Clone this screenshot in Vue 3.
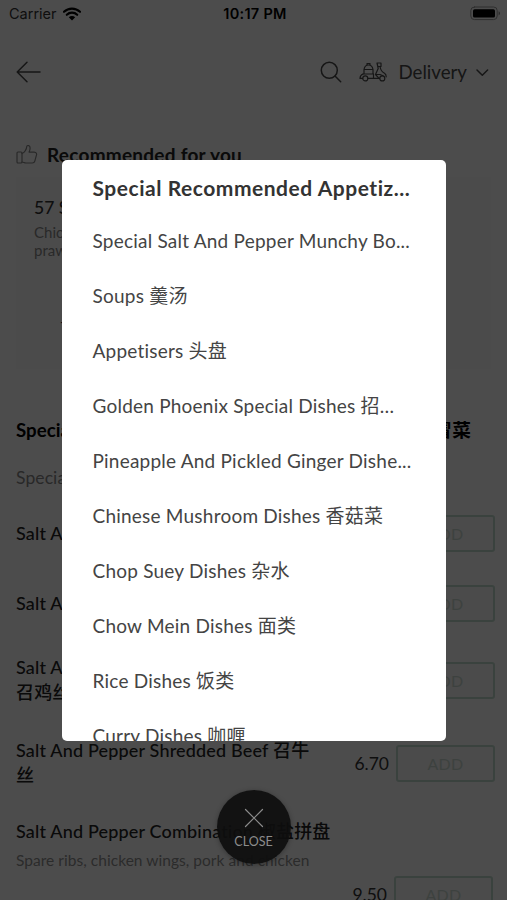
<template>
  <div class="screen">
    <div class="page">
      <div class="status-bar">
        <div class="carrier">
          <span>Carrier</span>
          <svg class="wifi" width="18" height="14" viewBox="0 0 18 14">
            <path d="M1 4.8a11.5 11.5 0 0 1 16 0" />
            <path d="M3.8 7.8a7.5 7.5 0 0 1 10.4 0" />
            <path class="wifi-dot" d="M9 13.4 5.8 10.3a4.6 4.6 0 0 1 6.4 0z" />
          </svg>
        </div>
        <span class="clock">10:17 PM</span>
        <svg class="battery" width="31" height="15" viewBox="0 0 31 15">
          <rect class="battery-case" x=".8" y="1" width="26.4" height="12.6" rx="3.6" />
          <rect x="3" y="3.2" width="22" height="8.4" rx="1.6" />
          <path class="battery-cap" d="M28.6 5.2v4.2a2.3 2.3 0 0 0 0-4.2z" />
        </svg>
      </div>

      <header class="nav-bar">
        <svg class="line-icon" width="25" height="22" viewBox="0 0 25 22">
          <path d="M24 11H1.5M11 1.2 1.2 11l9.8 9.8" />
        </svg>
        <div class="nav-actions">
          <svg class="line-icon search" width="22" height="22" viewBox="0 0 22 22">
            <circle cx="9.3" cy="9.3" r="8" />
            <path d="m15 15 5.700 5.700" />
          </svg>
          <svg class="line-icon scooter" width="28" height="20" viewBox="0 0 28 20">
            <path d="M5 7.500C5.500 4.500 7 3 9.500 3s4 1.500 4.500 4.500zM5 7.500V12M14 7.500V12M4 12h10.500M8 3V1.500h3V3" />
            <path d="M4 12c-2 .8-3 2.400-3 4.400h2.600M9 16.400h11.500M14.500 12v4.400" />
            <path d="M18 1h4v3.500h-3.200zM18 1l1.200 5.500-2.700 6 3.500 3.900M21 4.500c.6 3.500 2 5.500 4.500 6.800 1.200.7 1.700 1.700 1.700 3.500M17 12.500h4l3 1.200" />
            <circle cx="6.300" cy="16.400" r="2.500" />
            <circle cx="23.300" cy="16.400" r="2.500" />
          </svg>
          <span class="mode">Delivery</span>
          <svg class="line-icon" width="13" height="9" viewBox="0 0 13 9">
            <path d="m1 2 5.300 5.300L11.600 2" />
          </svg>
        </div>
      </header>

      <section class="recommended">
        <h2>
          <svg class="thumb" width="22" height="22" viewBox="0 0 22 22">
            <rect x="1" y="9" width="5" height="11" rx="1" />
            <path d="M6 10.500c3-1.500 4.500-4 4.800-7.300.6-1.200 3.300-.8 3.300 1.700 0 1.800-.4 3-1 4.200h5c2.400 0 3 2 2.200 3.600l-1.500 5.500c-.3 1.300-1.200 1.800-2.500 1.800H10c-1.800 0-2.500-1-4-1" />
          </svg>
          <span>Recommended for you</span>
        </h2>
        <div class="promo">
          <h3>57 Special Munchy Box</h3>
          <p>Chicken wings, ribs,<br />prawn toast</p>
          <span class="promo-price">- 12.50</span>
        </div>
      </section>

      <section class="menu">
        <h2><span>Special Salt And Pepper Dishes</span><span class="cjk">椒盐冒菜</span></h2>
        <p class="note">Special Salt And Pepper Dishes</p>
        <article
          v-for="dish in dishes"
          :key="dish.name"
          class="dish"
          :class="dish.size"
        >
          <div class="dish-text">
            <h4>{{ dish.name }}<template v-if="dish.second"><br />{{ dish.second }}</template></h4>
            <p v-if="dish.description">{{ dish.description }}</p>
          </div>
          <div class="dish-buy">
            <span>{{ dish.price }}</span>
            <button>ADD</button>
          </div>
        </article>
      </section>
    </div>

    <div class="overlay">
      <ul class="categories">
        <li
          v-for="(category, index) in categories"
          :key="category"
          :class="{ active: index === 0 }"
        >
          {{ category }}
        </li>
      </ul>
      <button class="close">
        <svg width="20" height="20" viewBox="0 0 20 20">
          <path d="m1.500 1.500 17 17m0-17-17 17" />
        </svg>
        <span>CLOSE</span>
      </button>
    </div>
  </div>
</template>

<script setup>
const categories = [
  'Special Recommended Appetiz...',
  'Special Salt And Pepper Munchy Bo...',
  'Soups 羹汤',
  'Appetisers 头盘',
  'Golden Phoenix Special Dishes 招…',
  'Pineapple And Pickled Ginger Dishe...',
  'Chinese Mushroom Dishes 香菇菜',
  'Chop Suey Dishes 杂水',
  'Chow Mein Dishes 面类',
  'Rice Dishes 饭类',
  'Curry Dishes 咖喱'
]

const dishes = [
  { name: 'Salt And Pepper Chips', price: '3.50', size: 'single' },
  { name: 'Salt And Pepper Wings', price: '5.50', size: 'single' },
  { name: 'Salt And Pepper Chicken', second: '召鸡丝', price: '6.70', size: 'double' },
  { name: 'Salt And Pepper Shredded Beef 召牛', second: '丝', price: '6.70', size: 'double' },
  {
    name: 'Salt And Pepper Combination 椒盐拼盘',
    description: 'Spare ribs, chicken wings, pork and chicken',
    price: '9.50',
    size: 'detailed'
  }
]
</script>

<style>
body {
  margin: 0;
  overflow: hidden;
}
</style>

<style scoped>
.screen {
  position: relative;
  width: 507px;
  height: 900px;
  overflow: hidden;
  font-family: Lato, "Noto Sans CJK SC", sans-serif;
  color: #333;
  background: #fff;
}

h2,
h3,
h4,
p,
ul {
  margin: 0;
  padding: 0;
}

button {
  font-family: inherit;
}

svg {
  flex: none;
  fill: none;
  stroke-linecap: round;
  stroke-linejoin: round;
}

.status-bar {
  display: grid;
  grid-template-columns: 1fr auto 1fr;
  align-items: center;
  height: 27px;
  padding: 0 6px 0 9px;
  font: 14.5px Inter, sans-serif;
  color: #000;
}

.carrier {
  display: flex;
  align-items: center;
  gap: 6px;
  color: #333;
}

.wifi {
  stroke: #000;
  stroke-width: 2.2;
}

.wifi .wifi-dot {
  fill: #000;
  stroke: none;
}

.clock {
  font-weight: 600;
  letter-spacing: 0.3px;
}

.battery {
  justify-self: end;
  fill: #000;
}

.battery .battery-case {
  fill: none;
  stroke: #999;
}

.battery .battery-cap {
  fill: #888;
}

.nav-bar {
  display: flex;
  align-items: center;
  justify-content: space-between;
  height: 90px;
  padding: 0 18px 0 16px;
}

.line-icon {
  stroke: #4a4a4a;
  stroke-width: 1.5;
}

.nav-actions {
  display: flex;
  align-items: center;
}

.search {
  margin-right: 17px;
}

.scooter {
  margin-right: 11px;
  stroke-width: 1.2;
}

.mode {
  margin-right: 9px;
  font-size: 18.7px;
  color: #4a4a4a;
}

.recommended {
  height: 297px;
  padding: 26px 16px 0;
  box-sizing: border-box;
}

.recommended h2 {
  display: flex;
  gap: 9px;
  font-size: 19px;
  line-height: 24px;
  letter-spacing: 0.25px;
  color: #222;
}

.thumb {
  stroke: #888;
  stroke-width: 1.2;
}

.promo {
  height: 192px;
  margin-top: 10px;
  padding: 20px 18px 0;
  box-sizing: border-box;
  background: #fcfcfc;
}

.promo h3 {
  font-size: 17.5px;
  font-weight: 500;
  line-height: 22px;
}

.promo p {
  margin-top: 5px;
  font-size: 15px;
  line-height: 17.5px;
  color: #8a8a8a;
}

.promo-price {
  display: block;
  margin: 52px 0 0 26px;
}

.menu {
  padding: 0 12px 0 16px;
}

.menu h2 {
  display: flex;
  justify-content: space-between;
  padding-right: 24px;
  font-size: 18.7px;
  line-height: 32px;
  color: #000;
}

.note {
  margin-top: 18px;
  font-size: 17.5px;
  line-height: 28px;
  letter-spacing: 0.1px;
  color: #888;
}

.dish {
  display: flex;
  align-items: center;
  justify-content: space-between;
}

.dish.single {
  height: 70.5px;
}

.dish.single:first-of-type {
  margin-top: 6px;
}

.dish.double {
  height: 83px;
}

.dish.double .dish-text {
  margin-top: -2px;
}

.dish.detailed {
  height: 120px;
  align-items: flex-start;
  padding-top: 14px;
}

.dish h4 {
  font-size: 18px;
  font-weight: 500;
  line-height: 25px;
  letter-spacing: 0.17px;
  color: #222;
}

.dish p {
  margin-top: 5px;
  font-size: 15.5px;
  line-height: 22px;
  letter-spacing: 0.04px;
  color: #929292;
  white-space: nowrap;
}

.dish-text {
  width: 330px;
}

.dish-buy {
  display: flex;
  align-items: center;
  gap: 7px;
  font-size: 17.5px;
}

.dish-buy button {
  width: 99px;
  height: 37px;
  border: 2px solid #c4dcd0;
  border-radius: 3px;
  background: #fafcfa;
  font-size: 16px;
  letter-spacing: 0.3px;
  color: #cddbd4;
}

.detailed .dish-buy {
  padding: 57px 2px 0 0;
}

.overlay {
  position: absolute;
  inset: 0;
  display: flex;
  flex-direction: column;
  align-items: center;
  padding-top: 160px;
  background: rgba(0, 0, 0, 0.7);
}

.categories {
  flex: none;
  width: 384px;
  height: 581px;
  padding: 0 30px 0 31px;
  box-sizing: border-box;
  overflow: hidden;
  border-radius: 5px;
  background: #fff;
  list-style: none;
}

.categories li {
  height: 55px;
  font-size: 19px;
  line-height: 51px;
  letter-spacing: 0.22px;
  color: #444;
  white-space: nowrap;
}

.categories .active {
  font-size: 21px;
  font-weight: 700;
  line-height: 55px;
  letter-spacing: 0.53px;
  color: #333;
}

.close {
  display: flex;
  flex-direction: column;
  align-items: center;
  gap: 6px;
  width: 74px;
  height: 74px;
  margin-top: 49px;
  padding: 18px 0 0;
  border: 0;
  border-radius: 50%;
  background: rgba(14, 14, 14, 0.93);
  box-shadow: 0 1px 5px rgba(0, 0, 0, 0.3);
  color: #8c8c8c;
  font-size: 12.5px;
  line-height: 15px;
}

.close svg {
  stroke: #8c8c8c;
  stroke-width: 1.2;
}
</style>
